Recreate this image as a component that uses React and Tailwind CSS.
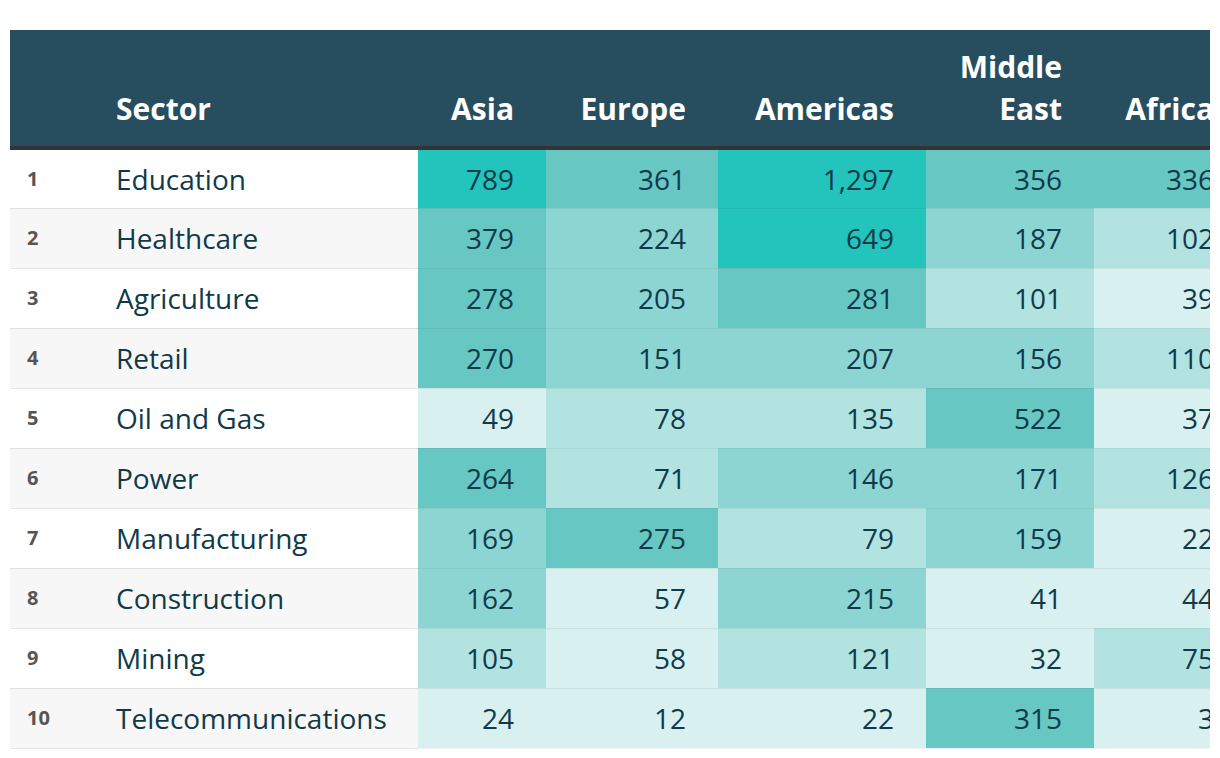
import React from 'react';

const L1 = 'bg-[#22c4bc]';
const L2 = 'bg-[#67c7c2]';
const L3 = 'bg-[#8dd5d2]';
const L4 = 'bg-[#b2e3e0]';
const L5 = 'bg-[#d9f0f0]';

const rows = [
  { sector: 'Education', cells: [['789', L1], ['361', L2], ['1,297', L1], ['356', L2], ['336', L2]] },
  { sector: 'Healthcare', cells: [['379', L2], ['224', L3], ['649', L1], ['187', L3], ['102', L4]] },
  { sector: 'Agriculture', cells: [['278', L2], ['205', L3], ['281', L2], ['101', L4], ['39', L5]] },
  { sector: 'Retail', cells: [['270', L2], ['151', L3], ['207', L3], ['156', L3], ['110', L4]] },
  { sector: 'Oil and Gas', cells: [['49', L5], ['78', L4], ['135', L4], ['522', L2], ['37', L5]] },
  { sector: 'Power', cells: [['264', L2], ['71', L4], ['146', L3], ['171', L3], ['126', L4]] },
  { sector: 'Manufacturing', cells: [['169', L3], ['275', L2], ['79', L4], ['159', L3], ['22', L5]] },
  { sector: 'Construction', cells: [['162', L3], ['57', L5], ['215', L3], ['41', L5], ['44', L5]] },
  { sector: 'Mining', cells: [['105', L4], ['58', L5], ['121', L4], ['32', L5], ['75', L4]] },
  { sector: 'Telecommunications', cells: [['24', L5], ['12', L5], ['22', L5], ['315', L2], ['3', L5]] },
];

const regions = ['Asia', 'Europe', 'Americas', 'Middle East', 'Africa'];
const widths = ['w-[128px]', 'w-[172px]', 'w-[208px]', 'w-[168px]', 'w-[152px]'];

export default function App() {
  return (
    <div className="bg-white min-h-[758px] pt-[30px] px-[10px]" style={{ fontFamily: '"Open Sans", "Noto Sans", sans-serif' }}>
      <div className="overflow-hidden">
        <table className="table-fixed border-collapse w-[1236px]">
          <colgroup>
            <col className="w-[90px]" />
            <col className="w-[318px]" />
            {widths.map((w, i) => (
              <col key={i} className={w} />
            ))}
          </colgroup>
          <thead>
            <tr className="bg-[#264e5f] border-b-4 border-[#333333]">
              <th className="pt-4 pb-4" />
              <th className="text-left align-bottom pl-4 pt-4 pb-4 text-[30px] leading-[42px] font-bold text-white">Sector</th>
              {regions.map((r) => (
                <th key={r} className="text-right align-bottom pr-8 pt-4 pb-4 text-[30px] leading-[42px] font-bold text-white whitespace-nowrap">
                  {r === 'Middle East' ? (
                    <>Middle<br />East</>
                  ) : (
                    r
                  )}
                </th>
              ))}
            </tr>
          </thead>
          <tbody>
            {rows.map((row, i) => (
              <tr key={row.sector} className={i % 2 === 0 ? 'bg-white' : 'bg-[#f7f7f7]'}>
                <td className="h-[60px] pl-[17px] border-b border-black/10 text-[20px] font-bold text-[#555555]">{i + 1}</td>
                <td className="h-[60px] pl-4 border-b border-black/10 text-[28px] text-[#0f3a4a] whitespace-nowrap">{row.sector}</td>
                {row.cells.map(([v, c], j) => (
                  <td key={j} className={`h-[60px] pr-8 text-right border-b border-black/5 text-[28px] text-[#0f3a4a] whitespace-nowrap ${c}`}>
                    {v}
                  </td>
                ))}
              </tr>
            ))}
          </tbody>
        </table>
      </div>
    </div>
  );
}
